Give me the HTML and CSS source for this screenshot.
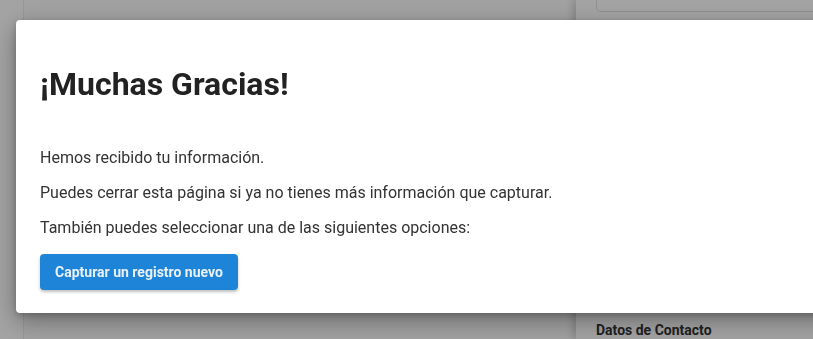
FILE: index.html
```html
<!DOCTYPE html>
<html lang="es">
<head>
<meta charset="utf-8">
<title>¡Muchas Gracias!</title>
<link rel="stylesheet" href="styles.css">
</head>
<body>
<div class="page">
  <div class="rail"></div>
  <div class="main"></div>
  <aside class="sidebar">
    <div class="field"></div>
    <h4 class="side-title">Datos de Contacto</h4>
  </aside>
</div>
<div class="backdrop"></div>
<div class="modal">
  <h2 class="modal-title">¡Muchas Gracias!</h2>
  <div class="modal-body">
    <p>Hemos recibido tu información.</p>
    <p>Puedes cerrar esta página si ya no tienes más información que capturar.</p>
    <p>También puedes seleccionar una de las siguientes opciones:</p>
    <button class="btn">Capturar un registro nuevo</button>
  </div>
</div>
</body>
</html>
```

FILE: styles.css
```css
html, body {
  margin: 0;
  height: 100%;
  overflow: hidden;
}
body {
  font-family: Roboto, "Liberation Sans", sans-serif;
  background: #ffffff;
}
.page {
  display: flex;
  height: 100%;
}
.rail {
  width: 23px;
  border-right: 1px solid #ececec;
  background: #ffffff;
}
.main {
  flex: 1;
  background: #fcfcfc;
}
.sidebar {
  width: 217px;
  padding-left: 20px;
  background: #ffffff;
  box-shadow: -3px 0 8px rgba(0,0,0,0.18);
  position: relative;
}
.field {
  height: 40px;
  margin-top: -30px;
  border: 1px solid #e2e2e2;
  border-right: none;
  border-radius: 5px 0 0 5px;
}
.side-title {
  margin: 310px 0 0;
  font-size: 14px;
  font-weight: 700;
  color: #333;
}
.backdrop {
  position: fixed;
  inset: 0;
  background: rgba(0,0,0,0.36);
}
.modal {
  position: fixed;
  left: 16px;
  top: 20px;
  right: -30px;
  height: 293px;
  box-sizing: border-box;
  padding: 45px 24px 0;
  background: #fff;
  border-radius: 4px;
  box-shadow: 0 8px 24px rgba(0,0,0,0.35), 0 2px 6px rgba(0,0,0,0.2);
}
.modal-title {
  margin: 0;
  font-size: 32px;
  line-height: 38px;
  font-weight: 700;
  color: #222;
}
.modal-body {
  margin-top: 45px;
}
.modal-body p {
  margin: 0 0 16px;
  font-size: 16px;
  line-height: 19px;
  color: #333;
}
.btn {
  display: block;
  margin-top: 17px;
  width: 198px;
  height: 36px;
  border: none;
  border-radius: 4px;
  background: #1e84d8;
  color: #e9f1fa;
  font-family: Roboto, "Liberation Sans", sans-serif;
  font-size: 14px;
  font-weight: 700;
  box-shadow: 0 2px 3px rgba(0,0,0,0.25);
  padding: 0;
}
```
